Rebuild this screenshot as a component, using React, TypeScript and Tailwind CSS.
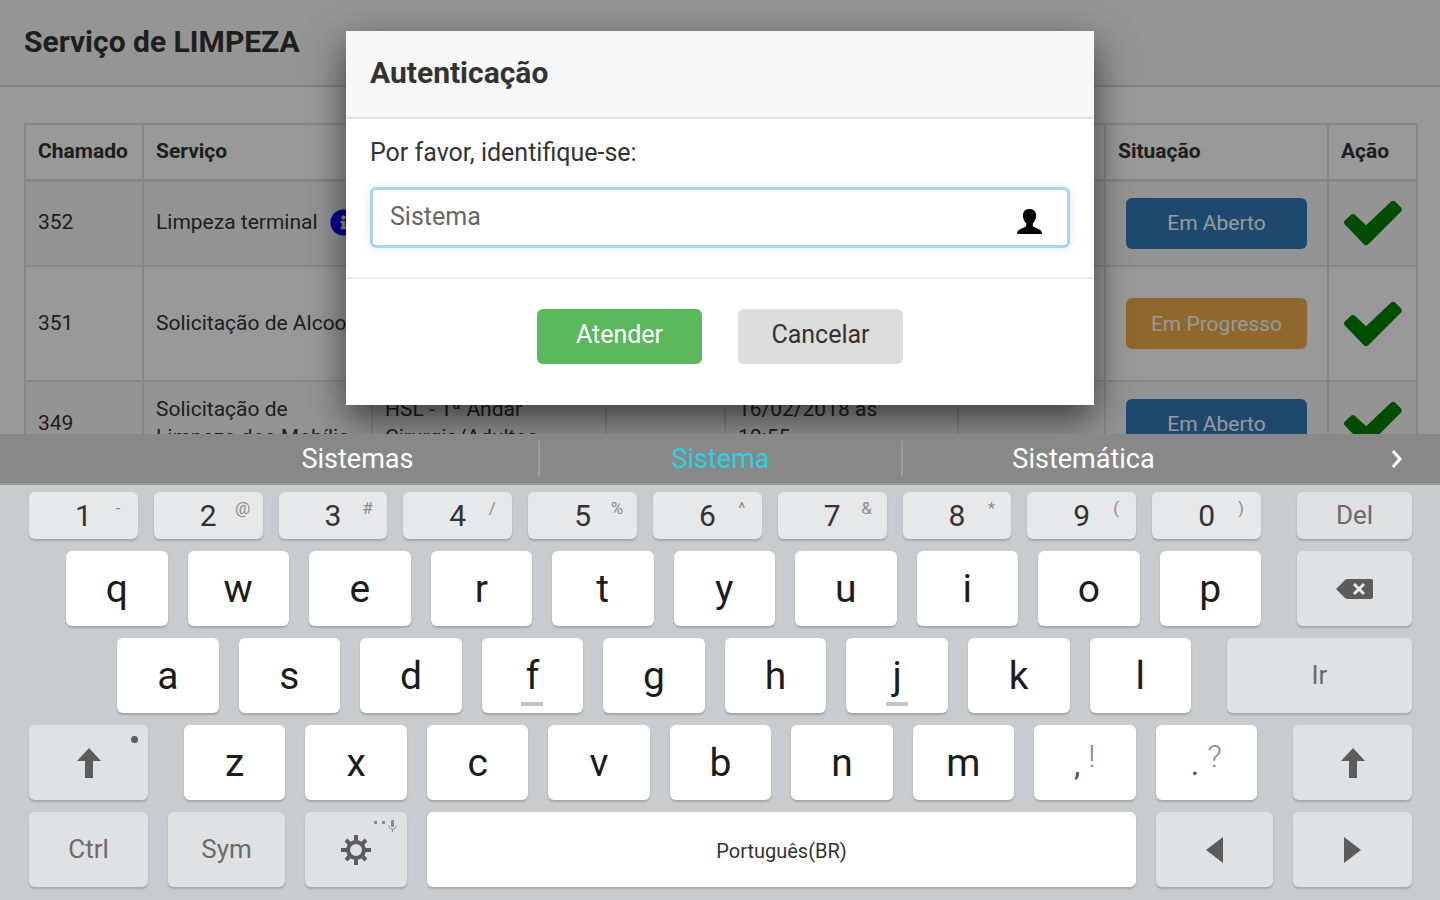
import clsx from "clsx";
import type { ReactNode } from "react";
import { FaInfoCircle } from "react-icons/fa";

type Status = "Em Aberto" | "Em Progresso";

type Ticket = {
  id: number;
  service: string[];
  info?: boolean;
  place: string[];
  date: string[];
  status: Status;
  height: string;
};

const TICKETS: Ticket[] = [
  {
    id: 352,
    service: ["Limpeza terminal"],
    info: true,
    place: [],
    date: [],
    status: "Em Aberto",
    height: "h-[86px]",
  },
  {
    id: 351,
    service: ["Solicitação de Alcool"],
    place: [],
    date: [],
    status: "Em Progresso",
    height: "h-[115px]",
  },
  {
    id: 349,
    service: ["Solicitação de", "Limpeza dos Mobília"],
    place: ["HSL - 1ª Andar", "Cirurgia/Adultos"],
    date: ["16/02/2018 às", "10:55"],
    status: "Em Aberto",
    height: "h-[86px]",
  },
];

const STATUS_COLOR: Record<Status, string> = {
  "Em Aberto": "bg-[#337ab7]",
  "Em Progresso": "bg-[#f0ad4e]",
};

const COLUMNS = [
  { label: "Chamado", width: "w-[118px]" },
  { label: "Serviço", width: "w-[229px]" },
  { label: "", width: "w-[234px]" },
  { label: "", width: "w-[119px]" },
  { label: "", width: "w-[233px]" },
  { label: "", width: "w-[147px]" },
  { label: "Situação", width: "w-[223px]" },
  { label: "Ação", width: "w-[89px]" },
];

const DIGITS = [
  ["1", "-"],
  ["2", "@"],
  ["3", "#"],
  ["4", "/"],
  ["5", "%"],
  ["6", "^"],
  ["7", "&"],
  ["8", "*"],
  ["9", "("],
  ["0", ")"],
];

function CheckIcon() {
  return (
    <svg viewBox="0 0 176 138" className="h-[46px] w-[58px]" fill="green">
      <path d="M2 62 21 44Q27 39 33 44L67 76 143 4Q149-1 155 4L173 22Q178 28 173 34L73 134Q67 139 61 134L2 73Q-2 67 2 62Z" />
    </svg>
  );
}

function UserIcon() {
  return (
    <svg viewBox="0 0 76 76" className="size-[25px]" fill="#000">
      <path d="M38 0C51 0 58 8 58 20C58 31 53 39 48 44V51C50 56 60 58 68 62C73 65 76 69 76 76H0C0 69 3 65 8 62C16 58 26 56 28 51V44C23 39 18 31 18 20C18 8 25 0 38 0Z" />
    </svg>
  );
}

function ShiftIcon() {
  return (
    <svg viewBox="0 0 24 30" className="h-[30px] w-6" fill="#5c5c5c">
      <path d="M12 0 24 13H16V30H8V13H0Z" />
    </svg>
  );
}

function BackspaceIcon() {
  return (
    <svg viewBox="0 0 37 20" className="h-5 w-[37px]">
      <path d="M0 10 9 1Q10 0 12 0H35Q37 0 37 2V18Q37 20 35 20H12Q10 20 9 19Z" fill="#5c5c5c" />
      <path d="m18 5 10 10m0-10L18 15" stroke="#e6e7e8" strokeWidth="3" />
    </svg>
  );
}

function GearIcon() {
  return (
    <svg viewBox="-15 -15 30 30" className="size-[30px]" stroke="#5c5c5c" fill="none">
      <circle r="8" strokeWidth="4" />
      <path
        d="M0-15V-9M0 9V15M-15 0H-9M9 0H15M-10-10-6-6M6 6 10 10M-10 10-6 6M6-6 10-10"
        strokeWidth="4"
      />
    </svg>
  );
}

function MicHint() {
  return (
    <svg viewBox="0 0 24 12" className="absolute top-2 right-[10px] h-3 w-6" fill="#8a8a8a">
      <path d="M1 1h3v3H1zM9 1h3v3H9z" />
      <rect x="18" y="0" width="3" height="7" rx="1" />
      <path d="M16 5.500c0 5 7 5 7 0M19.500 9v3" fill="none" stroke="#8a8a8a" />
    </svg>
  );
}

type KeyProps = {
  children?: ReactNode;
  tone?: "white" | "gray" | "digit";
  className?: string;
  label?: string;
};

function Key({ children, tone = "white", className, label }: KeyProps) {
  return (
    <button
      type="button"
      aria-label={label}
      className={clsx(
        "relative flex min-w-0 items-center justify-center rounded-md shadow-[0_2px_2px_rgba(0,0,0,0.18)]",
        tone === "white" && "bg-white pt-0.5 text-[39px] text-[#1c1c1c]",
        tone === "gray" && "bg-[#e0e1e3] text-[26px] text-[#6b6b6b]",
        tone === "digit" && "bg-[#e6e8e9] text-[30px] text-[#333]",
        className,
      )}
    >
      {children}
    </button>
  );
}

function Letters({ keys }: { keys: string }) {
  return keys.split("").map((letter) => (
    <Key key={letter} className="flex-1">
      {letter}
      {(letter === "f" || letter === "j") && (
        <span className="absolute bottom-[7px] h-1 w-[22px] bg-[#c4c4c4]" />
      )}
    </Key>
  ));
}

function PunctuationKey({ main, alt }: { main: string; alt: string }) {
  return (
    <Key className="flex-1">
      <span className="flex gap-2 text-[32px]">
        <span className="pt-2 text-[#555]">{main}</span>
        <span className="pb-4 font-light text-[#8a8a8a]">{alt}</span>
      </span>
    </Key>
  );
}

function TicketsPage() {
  return (
    <div className="bg-white">
      <header className="border-b-2 border-[#d8d8d8] bg-[#f8f8f8] px-6 pt-6 pb-[25px]">
        <h1 className="text-[30px] leading-9 font-bold text-[#333]">Serviço de LIMPEZA</h1>
      </header>
      <main className="pt-9 pr-[23px] pl-6">
        <table className="w-full table-fixed border-collapse text-[21px] leading-7 text-[#333]">
          <colgroup>
            {COLUMNS.map((column, i) => (
              <col key={i} className={column.width} />
            ))}
          </colgroup>
          <thead>
            <tr className="h-14">
              {COLUMNS.map((column, i) => (
                <th
                  key={i}
                  className="border-2 border-b-3 border-[#e0e0e0] px-3 pb-0.5 text-left font-bold"
                >
                  {column.label}
                </th>
              ))}
            </tr>
          </thead>
          <tbody>
            {TICKETS.map((ticket) => (
              <tr key={ticket.id} className={clsx(ticket.height, "odd:bg-[#f7f7f7]")}>
                <td className="border-2 border-[#e0e0e0] px-3 pb-0.5">{ticket.id}</td>
                <td className="border-2 border-[#e0e0e0] px-3 pb-0.5 whitespace-nowrap">
                  {ticket.service.map((line) => (
                    <div key={line} className="flex items-center gap-3">
                      {line}
                      {ticket.info && <FaInfoCircle size={27} color="blue" className="shrink-0" />}
                    </div>
                  ))}
                </td>
                <td className="border-2 border-[#e0e0e0] px-3 pb-0.5">
                  {ticket.place.map((line) => (
                    <div key={line}>{line}</div>
                  ))}
                </td>
                <td className="border-2 border-[#e0e0e0]" />
                <td className="border-2 border-[#e0e0e0] px-3 pb-0.5">
                  {ticket.date.map((line) => (
                    <div key={line}>{line}</div>
                  ))}
                </td>
                <td className="border-2 border-[#e0e0e0]" />
                <td className="border-2 border-[#e0e0e0] px-5">
                  <button
                    type="button"
                    className={clsx(
                      "h-[51px] w-full rounded-md text-[21px] text-white",
                      STATUS_COLOR[ticket.status],
                    )}
                  >
                    {ticket.status}
                  </button>
                </td>
                <td className="border-2 border-[#e0e0e0]">
                  <button type="button" aria-label="Atender" className="flex w-full justify-center">
                    <CheckIcon />
                  </button>
                </td>
              </tr>
            ))}
          </tbody>
        </table>
      </main>
    </div>
  );
}

function AuthDialog() {
  return (
    <div
      role="dialog"
      aria-labelledby="auth-title"
      className="mx-auto w-[748px] max-w-full bg-white text-[#333] shadow-[0_14px_36px_rgba(0,0,0,0.6)]"
    >
      <div className="border-b-2 border-[#e2e2e2] bg-[#f7f7f7] px-6 pt-6 pb-[26px]">
        <h2 id="auth-title" className="text-[30px] leading-9 font-bold">
          Autenticação
        </h2>
      </div>
      <div className="border-b-2 border-[#ececec] px-6 pt-[18px] pb-[29px]">
        <label htmlFor="user" className="block text-[25px] leading-8">
          Por favor, identifique-se:
        </label>
        <div className="relative mt-[18px]">
          <input
            id="user"
            type="text"
            defaultValue="Sistema"
            className="h-[61px] w-full rounded-md border-3 border-[#a9d3f2] px-[17px] pb-0.5 text-[25px] text-[#666] shadow-[0_0_8px_rgba(102,175,233,0.25)] outline-none"
          />
          <span className="absolute top-[22px] right-7">
            <UserIcon />
          </span>
        </div>
      </div>
      <div className="flex justify-center gap-9 pt-[30px] pb-[41px] text-[25px]">
        <button type="button" className="h-[55px] w-[165px] rounded-md bg-[#5cb85c] pb-1 text-white">
          Atender
        </button>
        <button type="button" className="h-[55px] w-[165px] rounded-md bg-[#ddd] pb-1">
          Cancelar
        </button>
      </div>
    </div>
  );
}

function Suggestions() {
  return (
    <div className="flex h-[51px] items-center border-b-2 border-[#98999a] bg-[#888889] pl-[177px] text-[27px] text-white">
      <button type="button" className="h-9 flex-1 border-r-2 border-[#9d9d9e] leading-9">
        Sistemas
      </button>
      <button type="button" className="h-9 flex-1 border-r-2 border-[#9d9d9e] leading-9 text-[#27d3e0]">
        Sistema
      </button>
      <button type="button" className="h-9 flex-1 leading-9">
        Sistemática
      </button>
      <button type="button" aria-label="Mais sugestões" className="flex w-44 justify-end pr-[37px]">
        <svg viewBox="0 0 12 20" className="h-5 w-3" fill="none" stroke="#fff" strokeWidth="3">
          <path d="m2 2 7 8-7 8" />
        </svg>
      </button>
    </div>
  );
}

function Keyboard() {
  return (
    <div className="flex flex-col gap-3 bg-[#c9cbcf] pt-[7px] pr-7 pb-[13px] pl-[29px]">
      <div className="flex h-[47px] gap-9">
        <div className="flex flex-1 gap-4">
          {DIGITS.map(([digit, hint]) => (
            <Key key={digit} tone="digit" className="flex-1">
              {digit}
              <span className="absolute top-1 right-2 w-6 text-center text-[17px] leading-6 text-[#8c8c8c]">
                {hint}
              </span>
            </Key>
          ))}
        </div>
        <Key tone="gray" className="w-[115px]">
          Del
        </Key>
      </div>
      <div className="flex h-[75px] gap-9 pl-[37px]">
        <div className="flex flex-1 gap-5">
          <Letters keys="qwertyuiop" />
        </div>
        <Key tone="gray" className="w-[115px]" label="Apagar">
          <BackspaceIcon />
        </Key>
      </div>
      <div className="flex h-[75px] gap-9 pl-[88px]">
        <div className="flex flex-1 gap-5">
          <Letters keys="asdfghjkl" />
        </div>
        <Key tone="gray" className="w-[185px]">
          Ir
        </Key>
      </div>
      <div className="flex h-[75px] gap-9">
        <Key tone="gray" className="w-[119px]" label="Shift">
          <ShiftIcon />
          <span className="absolute top-[11px] right-[10px] size-[7px] rounded-full bg-[#5c5c5c]" />
        </Key>
        <div className="flex flex-1 gap-5">
          <Letters keys="zxcvbnm" />
          <PunctuationKey main="," alt="!" />
          <PunctuationKey main="." alt="?" />
        </div>
        <Key tone="gray" className="w-[119px]" label="Shift">
          <ShiftIcon />
        </Key>
      </div>
      <div className="flex h-[75px] gap-5">
        <Key tone="gray" className="w-[119px]">
          Ctrl
        </Key>
        <Key tone="gray" className="w-[117px]">
          Sym
        </Key>
        <Key tone="gray" className="w-[102px]" label="Configurações">
          <GearIcon />
          <MicHint />
        </Key>
        <Key className="flex-1">
          <span className="text-[20px] text-[#333]">Português(BR)</span>
        </Key>
        <Key tone="gray" className="w-[117px]" label="Esquerda">
          <svg viewBox="0 0 17 26" className="h-[26px] w-[17px]" fill="#5c5c5c">
            <path d="M17 0V26L0 13Z" />
          </svg>
        </Key>
        <Key tone="gray" className="w-[119px]" label="Direita">
          <svg viewBox="0 0 17 26" className="h-[26px] w-[17px]" fill="#5c5c5c">
            <path d="M0 0V26L17 13Z" />
          </svg>
        </Key>
      </div>
    </div>
  );
}

export default function App() {
  return (
    <div className="flex h-screen flex-col font-[Roboto,sans-serif]">
      <div className="relative min-h-0 flex-1 overflow-hidden">
        <TicketsPage />
        {/* Backdrop */}
        <div className="absolute inset-0 bg-black/40 pt-[31px]">
          <AuthDialog />
        </div>
      </div>
      <Suggestions />
      <Keyboard />
    </div>
  );
}
